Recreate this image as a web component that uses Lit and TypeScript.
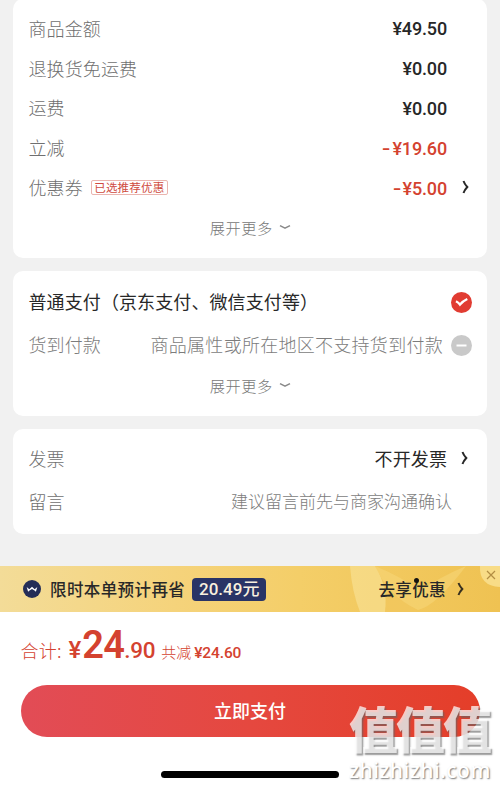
import { LitElement, html, css, svg } from "lit";
import { customElement, property } from "lit/decorators.js";

const shared = css`
  * { box-sizing: border-box; }
  svg { display: block; flex: none; }
`;

@customElement("fee-row")
class FeeRow extends LitElement {
  @property() label = "";
  @property() tag = "";
  @property() value = "";
  @property({ type: Boolean }) red = false;
  @property({ type: Boolean }) arrow = false;
  static styles = [shared, css`
    :host { display: flex; align-items: center; height: 39.8px; }
    .label { color: #6f6f6f; font-size: 18px; font-weight: 300; letter-spacing: 0.1px; }
    .tag { margin-left: 8px; width: 77px; height: 15px; border: 1px solid #eab5af; border-radius: 2px; color: #cf4b40;
      font-size: 11.5px; line-height: 12px; letter-spacing: 0.2px; text-align: center; }
    .value { margin-left: auto; font: 500 18px Roboto, "Noto Sans CJK SC", sans-serif; letter-spacing: -0.15px; color: #272727; padding-top: 2px; }
    .red { color: #d4422f; }
    .minus { display: inline-block; transform: scaleX(1.35); margin-right: 3px; }
    .end { width: 40px; padding-left: 14px; }
  `];
  render() {
    const negative = this.value.startsWith("-");
    return html`<span class="label">${this.label}</span>
      ${this.tag ? html`<span class="tag">${this.tag}</span>` : ""}
      <span class="value ${this.red ? "red" : ""}">${negative ? html`<span class="minus">-</span>` : ""}${negative ? this.value.slice(1) : this.value}</span>
      <span class="end">${this.arrow ? chevron("#272727") : ""}</span>`;
  }
}

const chevron = (color: string) => html`<svg width="9" height="14" viewBox="0 0 9 14">
  ${svg`<path d="M2.5 1 Q3.5 4 6.3 7 Q3.5 10 2.5 13" fill="none" stroke=${color} stroke-width="2"/>`}</svg>`;

const more = () => html`<div class="more"><span>展开更多</span>
  <svg width="12" height="6" viewBox="0 0 12 6"><path d="M1 1.6 L6 4.2 L11 1.6" fill="none" stroke="#888" stroke-width="1.5" stroke-linejoin="round"/></svg></div>`;

@customElement("app-root")
class AppRoot extends LitElement {
  static styles = [shared, css`
    :host { display: flex; flex-direction: column; position: relative; height: 788px; overflow: hidden; background: #f1f1f1;
      font-family: "Noto Sans CJK SC", sans-serif; color: #282828; white-space: nowrap; }
    .card { margin: 0 13px 13px; border-radius: 10px; background: #fff; padding: 0 15px 0 15.5px; }
    .fees { height: 259px; margin-top: -1px; padding-top: 9px; padding-right: 0; }
    .more { display: flex; align-items: center; justify-content: center; gap: 6px; height: 40px; color: #777; font-weight: 300; font-size: 15.2px; letter-spacing: 0.6px; }
    .fees .more { margin-right: 15px; }
    .pay { height: 145px; padding-top: 8px; }
    .row { display: flex; align-items: center; justify-content: space-between; height: 43px; font-size: 18px; letter-spacing: 0.1px; }
    .pay .more { height: 39px; }
    .pay .row svg { position: relative; top: 2px; }
    .dim { color: #7c7c7c; font-weight: 300; }
    .grey { color: #6f6f6f; font-weight: 300; }
    .why { display: flex; align-items: center; gap: 8px; letter-spacing: 0.28px; }
    .memo { height: 105px; padding-top: 7px; margin-bottom: 32px; }
    .choice { display: flex; align-items: center; gap: 13px; padding-right: 3px; }
    .hint { font-size: 17px; letter-spacing: 0; padding-right: 20px; }
    .banner { position: relative; display: flex; align-items: center; height: 46px; padding: 0 35px 0 23px; flex: none;
      background: linear-gradient(90deg, #f3dc98, #f5d37b 35%, #f4ce68 60%, #efc252); }
    .art { position: absolute; inset: 0; }
    .banner > span { position: relative; }
    .badge { margin-right: 9px; }
    .promo { font-size: 16.5px; font-weight: 500; letter-spacing: 0.4px; }
    .save { margin-left: 7px; width: 74px; height: 23px; border-radius: 4px; background: #293466; color: #f8f0df; text-align: center;
      font: 500 17px/22px Roboto, "Noto Sans CJK SC", sans-serif; }
    .go { margin-left: auto; margin-right: 10px; font-size: 16.5px; font-weight: 500; letter-spacing: 0.4px; }
    .dot { position: absolute; left: 35.5px; top: 1px; width: 5px; height: 5px; border-radius: 50%; background: #151310; }
    .foot { flex: 1; background: #fff; padding: 0 20.5px; display: flex; flex-direction: column; }
    .total { display: flex; align-items: baseline; height: 73px; color: #d4422f; line-height: 67px; }
    .sum { font-size: 18px; letter-spacing: 0.2px; font-weight: 300; }
    .num { font-family: Roboto, sans-serif; font-weight: 500; }
    .yen { font-size: 24px; margin-left: 7px; }
    .big { font-size: 38px; font-weight: 600; letter-spacing: -0.8px; margin-left: 1px; }
    .cents { font-size: 22.5px; letter-spacing: -0.3px; }
    .off { font-size: 15px; font-weight: 300; margin-left: 6px; margin-right: 3px; }
    .offnum { font-size: 15.5px; letter-spacing: -0.1px; }
    .button { height: 52px; width: 459px; border-radius: 26px; background: linear-gradient(90deg, #e24c56, #e5483f 50%, #e43e29); color: #fff;
      font-size: 18px; font-weight: 500; line-height: 51px; text-align: center; }
    .home { width: 178px; height: 7px; border-radius: 4px; background: #000; margin: 34px 0 0 140px; }
    .mark { position: absolute; left: 349px; top: 702px; width: 150px; }
    .zhi { font: 900 49px/58px "Liberation Sans", "Noto Sans CJK SC", sans-serif; letter-spacing: -2px; color: rgba(255,255,255,.72); text-shadow: 1.5px 1.5px 1.5px rgba(100,100,100,.65); }
    .url { font: 500 21px/20px "Noto Sans", sans-serif; letter-spacing: 0.5px; color: #fff; text-shadow: 1px 1px 1.5px rgba(80,80,80,.75); }
  `];
  render() {
    return html`
      <section class="card fees">
        <fee-row label="商品金额" value="¥49.50"></fee-row>
        <fee-row label="退换货免运费" value="¥0.00"></fee-row>
        <fee-row label="运费" value="¥0.00"></fee-row>
        <fee-row label="立减" value="-¥19.60" red></fee-row>
        <fee-row label="优惠券" tag="已选推荐优惠" value="-¥5.00" red arrow></fee-row>
        ${more()}
      </section>
      <section class="card pay">
        <div class="row"><span>普通支付（京东支付、微信支付等）</span>
          <svg width="21" height="21" viewBox="0 0 21 21"><circle cx="10.5" cy="10.5" r="10.5" fill="#e13c32"/><path d="M5 9.2 Q7.5 10.5 9 12.6 Q12 9 16.3 7" fill="none" stroke="#fff" stroke-width="2.4"/></svg></div>
        <div class="row dim"><span>货到付款</span><span class="why">商品属性或所在地区不支持货到付款
          <svg width="21" height="21" viewBox="0 0 21 21"><circle cx="10.5" cy="10.5" r="10.5" fill="#c9c9c9"/><path d="M5.5 10.5 H15.5" stroke="#fff" stroke-width="2"/></svg></span></div>
        ${more()}
      </section>
      <section class="card memo">
        <div class="row"><span class="grey">发票</span><span class="choice">不开发票 ${chevron("#272727")}</span></div>
        <div class="row"><span class="grey">留言</span><span class="hint dim">建议留言前先与商家沟通确认</span></div>
      </section>
      <section class="banner">
        <svg class="art" width="500" height="46" viewBox="0 0 500 46">
          <path d="M350 0 Q352 26 360 46 H385 Q389 22 375 0Z" fill="#f8df91" opacity=".7"/>
          <path d="M375 0 Q402 34 418 46 H385 Q388 20 375 0Z" fill="#f1c65d" opacity=".6"/>
          <path d="M375 0 Q388 30 418 44 Q436 40 466 0 Q438 12 420 25 Q402 11 375 0Z" fill="#f7d577" opacity=".6"/>
          <path d="M480 0 Q479 20 500 21 V0Z" fill="#f8dc87"/>
          <path d="M487 5 L495 13 M495 5 L487 13" stroke="#b28d43" stroke-width="1.2"/>
        </svg>
        <span class="badge"><svg width="18" height="18" viewBox="0 0 18 18"><circle cx="9" cy="9" r="9" fill="#242d57"/><path d="M3.7 7 L6.3 9.2 L9 6.7 L11.7 9.2 L14.3 7 L12.9 11.7 L11.5 10.6 L9 9 L6.5 10.6 L5.1 11.7Z" fill="#fff"/></svg></span>
        <span class="promo">限时本单预计再省</span><span class="save">20.49元</span>
        <span class="go">去享优惠<i class="dot"></i></span><span>${chevron("#37301f")}</span>
      </section>
      <section class="foot">
        <div class="total"><span class="sum">合计:</span><span class="num yen">¥</span><span class="num big">24</span><span class="num cents">.90</span><span class="off">共减</span><span class="num offnum">¥24.60</span></div>
        <div class="button">立即支付</div>
        <div class="home"></div>
      </section>
      <div class="mark"><div class="zhi">值值值</div><div class="url">zhizhizhi.com</div></div>`;
  }
}
